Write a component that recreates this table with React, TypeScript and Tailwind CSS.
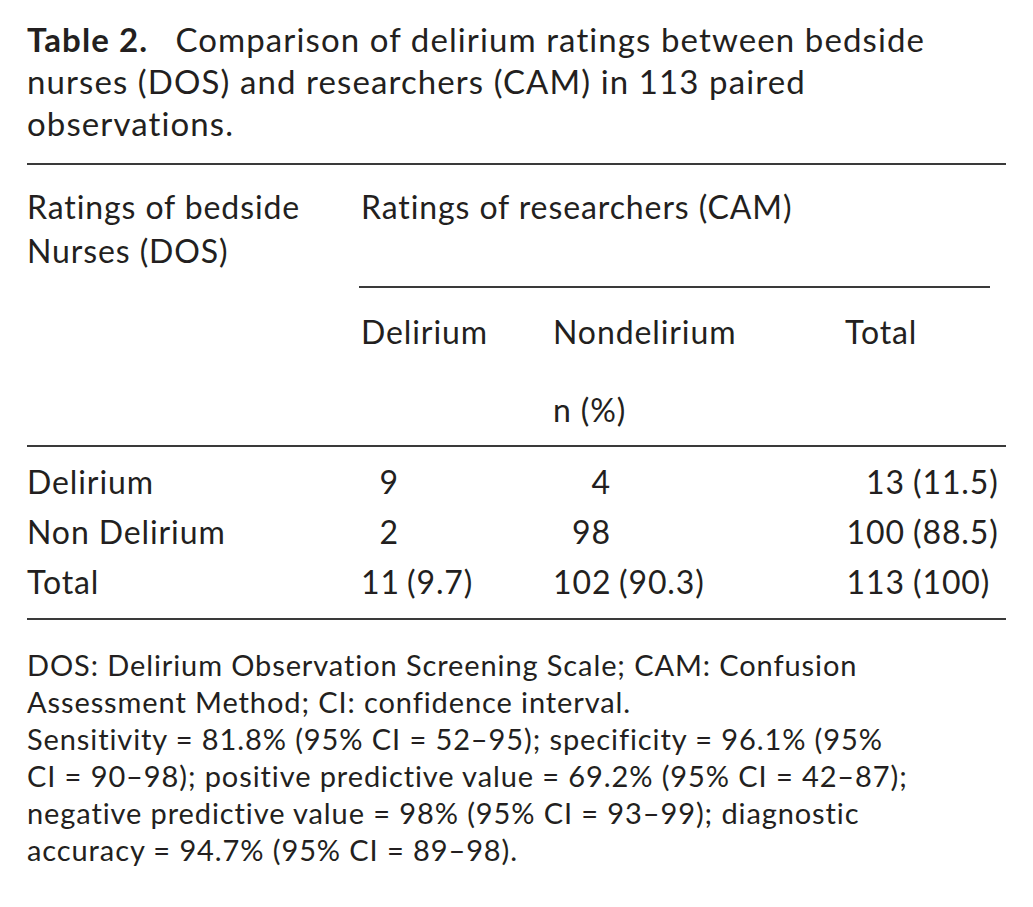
const rows = [
  { label: 'Delirium', d: ['9', ''], n: ['4', ''], t: ['13', '(11.5)'] },
  { label: 'Non Delirium', d: ['2', ''], n: ['98', ''], t: ['100', '(88.5)'] },
  { label: 'Total', d: ['11', '(9.7)'], n: ['102', '(90.3)'], t: ['113', '(100)'] },
];

function Num({ value, w }: { value: string[]; w: string }) {
  return (
    <div className="flex whitespace-nowrap">
      <span className={`${w} shrink-0 text-right`}>{value[0]}</span>
      {value[1] && <span className="pl-[8px]">{value[1]}</span>}
    </div>
  );
}

export default function App() {
  return (
    <div className="min-h-screen bg-white px-[27px] pt-[18px] text-[#231f20] font-['Lato',sans-serif]">
      {/* Caption */}
      <p className="text-[33px] leading-[42px] tracking-[1.1px] whitespace-nowrap">
        <b className="font-bold">Table 2.</b>&ensp; Comparison of delirium ratings between bedside
        <br />
        nurses (DOS) and researchers (CAM) in 113 paired
        <br />
        observations.
      </p>

      <div className="mt-[19px] border-t-2 border-[#3a3a3a]" />

      {/* Header */}
      <div className="grid grid-cols-[334px_192px_292px_1fr] text-[32px] leading-[44px] tracking-[0.9px] pt-[20px] whitespace-nowrap">
        <div className="row-span-2">
          Ratings of bedside
          <br />
          Nurses (DOS)
        </div>
        <div className="col-span-3 mr-[16px] -ml-[2px] pl-[2px] pb-[57px] border-b-2 border-[#3a3a3a]">
          Ratings of researchers (CAM)
        </div>
        <div className="mt-[22px]">Delirium</div>
        <div className="mt-[22px]">Nondelirium</div>
        <div className="mt-[22px]">Total</div>
        <div />
        <div />
        <div className="mt-[34px]">n (%)</div>
        <div />
      </div>

      <div className="mt-[13px] border-t-2 border-[#3a3a3a]" />

      {/* Body */}
      <div className="grid grid-cols-[334px_192px_292px_1fr] text-[32px] leading-[50px] tracking-[0.9px] pt-[10px] pb-[11px]">
        {rows.map(r => (
          <div key={r.label} className="contents">
            <div>{r.label}</div>
            <Num value={r.d} w="w-[38px]" />
            <Num value={r.n} w="w-[58px]" />
            <Num value={r.t} w="w-[60px]" />
          </div>
        ))}
      </div>

      <div className="border-t-2 border-[#3a3a3a]" />

      {/* Notes */}
      <p className="mt-[26px] text-[29px] leading-[37px] tracking-[0.9px] whitespace-nowrap">
        DOS: Delirium Observation Screening Scale; CAM: Confusion
        <br />
        Assessment Method; CI: confidence interval.
        <br />
        Sensitivity = 81.8% (95% CI = 52–95); specificity = 96.1% (95%
        <br />
        CI = 90–98); positive predictive value = 69.2% (95% CI = 42–87);
        <br />
        negative predictive value = 98% (95% CI = 93–99); diagnostic
        <br />
        accuracy = 94.7% (95% CI = 89–98).
      </p>
    </div>
  );
}
